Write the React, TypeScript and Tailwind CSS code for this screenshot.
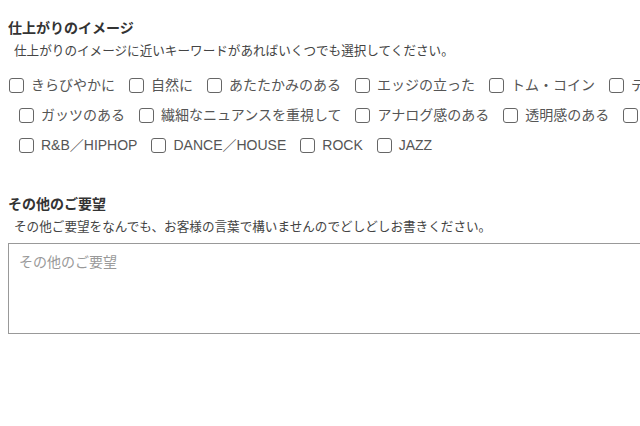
const font = { fontFamily: '"Liberation Sans", "Noto Sans CJK JP", sans-serif' };

const rows: string[][] = [
  ['きらびやかに', '自然に', 'あたたかみのある', 'エッジの立った', 'トム・コイン', 'テクノ'],
  ['ガッツのある', '繊細なニュアンスを重視して', 'アナログ感のある', '透明感のある', 'クール'],
  ['R&B／HIPHOP', 'DANCE／HOUSE', 'ROCK', 'JAZZ'],
];

function Check({ label }: { label: string }) {
  return (
    <label className="flex items-center shrink-0 mr-[14px] whitespace-nowrap">
      <span className="w-[15px] h-[15px] border border-[#666] rounded-[3px] bg-white shrink-0" />
      <span className="ml-[7px] text-[14px] text-[#555]">{label}</span>
    </label>
  );
}

export default function App() {
  return (
    <div className="w-[640px] h-[426px] overflow-hidden bg-white" style={font}>
      <div className="w-[800px] pl-[8px] pt-[18px]">
        <h2 className="text-[14px] leading-[20px] font-bold text-[#333]">仕上がりのイメージ</h2>
        <p className="text-[12.6px] leading-[18px] text-[#444] mt-[4px] pl-[6px]">
          仕上がりのイメージに近いキーワードがあればいくつでも選択してください。
        </p>
        <div className="mt-[10px] flex flex-col">
          {rows.map((r, i) => (
            <div key={i} className={`flex h-[30px] items-center ${i === 0 ? 'pl-[1px]' : 'pl-[11px]'}`}>
              {r.map((l) => (
                <Check key={l} label={l} />
              ))}
            </div>
          ))}
        </div>
        <h2 className="mt-[34px] text-[14px] leading-[20px] font-bold text-[#333]">その他のご要望</h2>
        <p className="text-[12.6px] leading-[18px] text-[#444] mt-[4px] pl-[6px]">
          その他ご要望をなんでも、お客様の言葉で構いませんのでどしどしお書きください。
        </p>
        <textarea
          className="mt-[7px] block w-[780px] h-[91px] border border-[#999] px-[10px] pt-[8px] text-[14px] leading-[20px] text-[#555] placeholder:text-[#999] resize-none outline-none"
          style={font}
          placeholder="その他のご要望"
        />
      </div>
    </div>
  );
}
